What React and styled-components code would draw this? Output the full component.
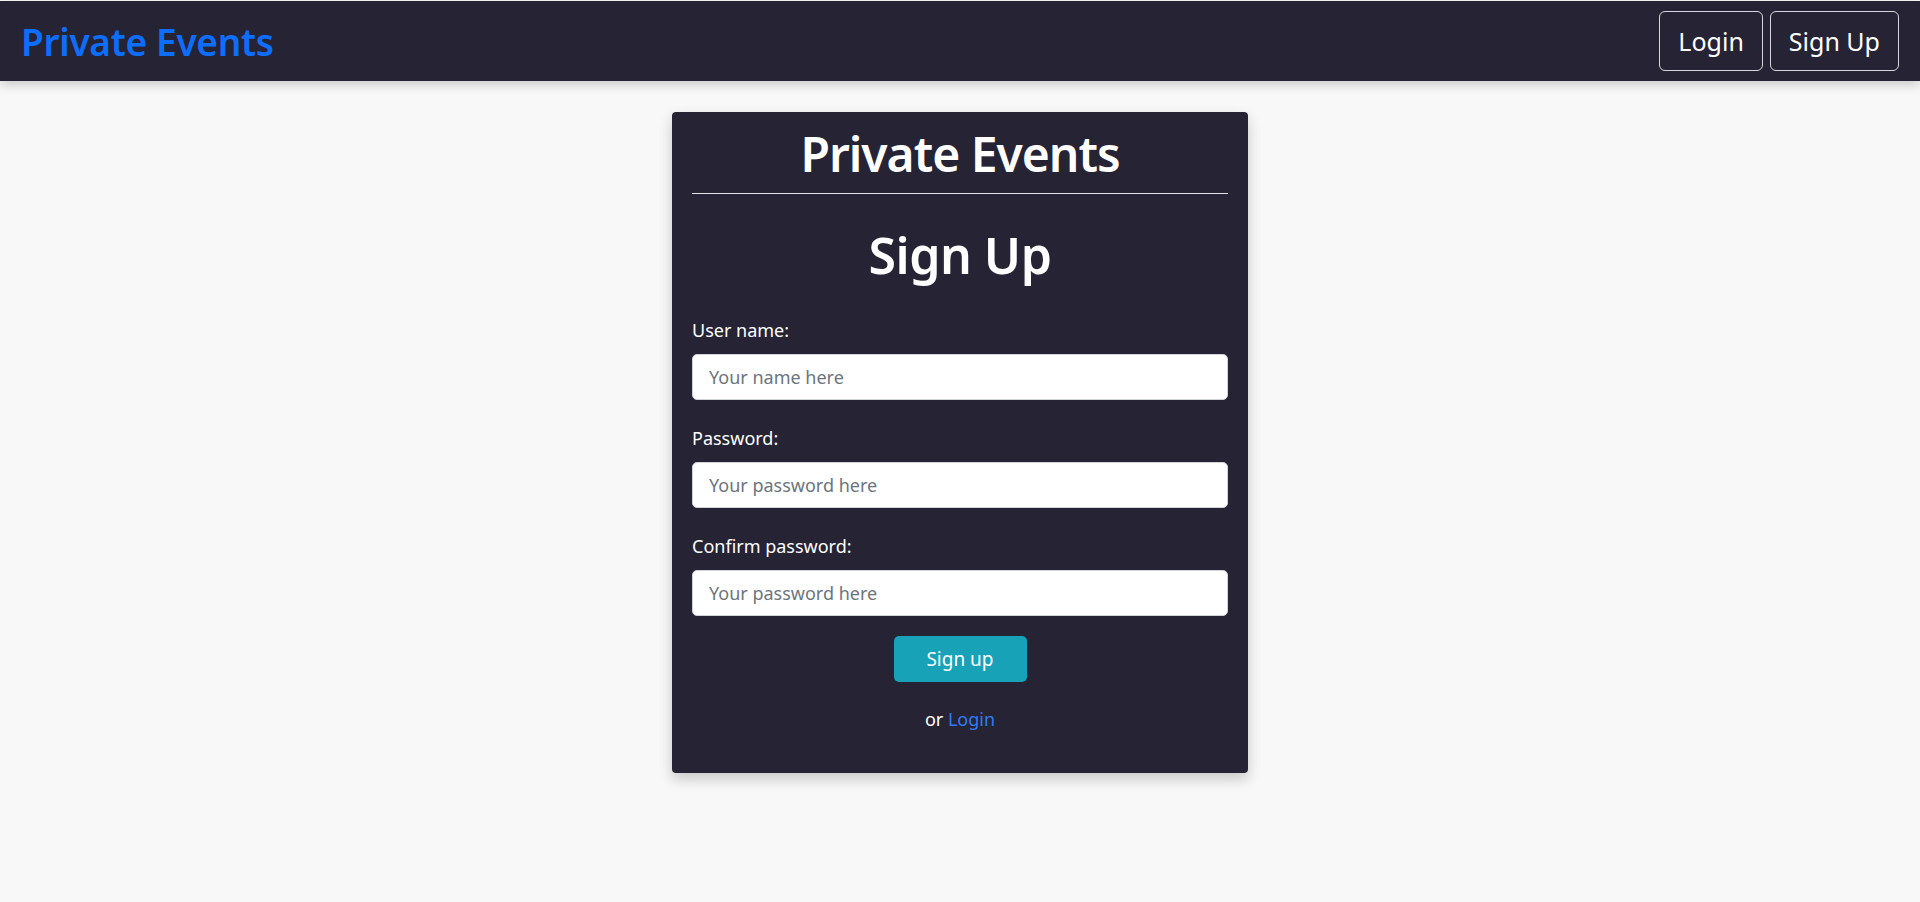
import React from "react";
import styled, { createGlobalStyle } from "styled-components";

const GlobalStyle = createGlobalStyle`
  body {
    margin: 0;
    background: #f8f8f8;
    font-family: "Noto Sans", "Open Sans", sans-serif;
  }
`;

const Page = styled.div`
  min-height: 902px;
  padding-top: 1px;
  box-sizing: border-box;
`;

const Navbar = styled.nav`
  height: 80px;
  background: #252334;
  display: flex;
  align-items: center;
  justify-content: space-between;
  padding: 0 21px 0 21px;
  box-shadow: 0 4px 10px rgba(0, 0, 0, 0.18);
`;

const Brand = styled.a`
  color: #0d6efd;
  font-size: 37px;
  font-weight: 600;
  text-decoration: none;
  letter-spacing: -0.3px;
`;

const NavButtons = styled.div`
  display: flex;
  gap: 7px;
`;

const NavButton = styled.button`
  height: 60px;
  padding: 0 ${(p) => p.$pad || 17}px;
  background: transparent;
  color: #fff;
  border: 1px solid #d8d8dc;
  border-radius: 6px;
  font-family: inherit;
  font-size: 25px;
  cursor: pointer;
`;

const Card = styled.div`
  width: 576px;
  box-sizing: border-box;
  margin: 31px auto 0;
  padding: 11px 20px 42px;
  background: #252334;
  border-radius: 4px;
  box-shadow: 0 6px 14px rgba(0, 0, 0, 0.2);
  color: #fff;
`;

const CardTitle = styled.h1`
  margin: 0;
  text-align: center;
  font-size: 48px;
  line-height: 62px;
  font-weight: 600;
  letter-spacing: -1px;
`;

const Divider = styled.hr`
  margin: 8px 0 0;
  border: none;
  border-top: 1px solid #e6e6ea;
`;

const FormTitle = styled.h2`
  margin: 30px 0 0;
  text-align: center;
  font-size: 50px;
  line-height: 62px;
  font-weight: 600;
  letter-spacing: -0.5px;
`;

const Form = styled.form`
  margin-top: 32px;
  display: flex;
  flex-direction: column;
`;

const Field = styled.div`
  display: flex;
  flex-direction: column;
  gap: 12px;
  margin-bottom: 26px;
  &:last-of-type {
    margin-bottom: 20px;
  }
`;

const Label = styled.label`
  font-size: 18px;
  line-height: 24px;
`;

const Input = styled.input`
  height: 46px;
  box-sizing: border-box;
  padding: 0 16px;
  border: 1px solid #ced4da;
  border-radius: 5px;
  background: #fff;
  font-family: inherit;
  font-size: 18px;
  color: #212529;
  outline: none;
  &::placeholder {
    color: #6c757d;
  }
`;

const SubmitButton = styled.button`
  align-self: center;
  width: 133px;
  height: 46px;
  border: none;
  border-radius: 5px;
  background: #17a2b8;
  color: #fff;
  font-family: inherit;
  font-size: 19px;
  cursor: pointer;
`;

const AltText = styled.p`
  margin: 25px 0 0;
  text-align: center;
  font-size: 18px;
  line-height: 24px;
`;

const AltLink = styled.a`
  color: #2f7cf6;
  text-decoration: none;
`;

const fields = [
  { id: "username", label: "User name:", type: "text", placeholder: "Your name here" },
  { id: "password", label: "Password:", type: "password", placeholder: "Your password here" },
  { id: "confirm", label: "Confirm password:", type: "password", placeholder: "Your password here" },
];

export default function App() {
  return (
    <Page>
      <GlobalStyle />
      <Navbar>
        <Brand href="#">Private Events</Brand>
        <NavButtons>
          <NavButton $pad={18}>Login</NavButton>
          <NavButton $pad={18}>Sign Up</NavButton>
        </NavButtons>
      </Navbar>
      <Card>
        <CardTitle>Private Events</CardTitle>
        <Divider />
        <FormTitle>Sign Up</FormTitle>
        <Form onSubmit={(e) => e.preventDefault()}>
          {fields.map((f) => (
            <Field key={f.id}>
              <Label htmlFor={f.id}>{f.label}</Label>
              <Input id={f.id} type={f.type} placeholder={f.placeholder} />
            </Field>
          ))}
          <SubmitButton type="submit">Sign up</SubmitButton>
        </Form>
        <AltText>
          or <AltLink href="#">Login</AltLink>
        </AltText>
      </Card>
    </Page>
  );
}
